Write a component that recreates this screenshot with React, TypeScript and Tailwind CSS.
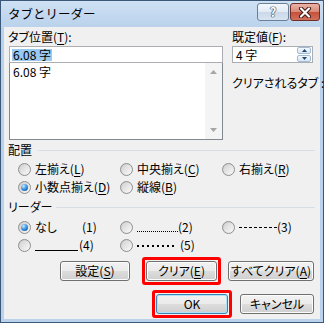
import React from "react";

const K = ({ c }: { c: string }) => <span className="underline underline-offset-[2px]">{c}</span>;

function Radio({ checked = false }: { checked?: boolean }) {
  return (
    <span className="flex h-[13px] w-[13px] shrink-0 items-center justify-center rounded-full border border-[#8f8f8f] bg-gradient-to-br from-[#c9c9c9] to-[#fafafa]">
      <span
        className={
          checked
            ? "h-[7px] w-[7px] rounded-full bg-[radial-gradient(circle_at_35%_30%,#c4ebff,#2f86d6_55%,#13508f)]"
            : "h-[9px] w-[9px] rounded-full bg-gradient-to-br from-[#d4d4d4] to-[#f7f7f7]"
        }
      />
    </span>
  );
}

function Btn({ children, className = "", def = false }: { children: React.ReactNode; className?: string; def?: boolean }) {
  return (
    <div
      className={`flex h-[20px] items-center justify-center whitespace-nowrap rounded-[3px] border leading-[14px] ${
        def ? "border-[#3c7fb1] shadow-[inset_0_0_0_1px_#aee3f8]" : "border-[#707070] shadow-[inset_0_0_0_1px_#fcfcfc]"
      } bg-[linear-gradient(#f2f2f2_0%,#ebebeb_50%,#dddddd_50%,#cfcfcf_100%)] ${className}`}
    >
      {children}
    </div>
  );
}

function Section({ title, line }: { title: string; line: string }) {
  return (
    <div className="flex h-[16px] items-center pl-[4px] pr-[5px]">
      <span>{title}</span>
      <span className={`${line} h-px flex-1 bg-[#d5dfe5]`} />
    </div>
  );
}

export default function App() {
  return (
    <div className="flex h-[323px] w-[324px] flex-col whitespace-nowrap border border-[#3c5878] bg-[#bad2ec] font-['Noto_Sans_CJK_JP','Liberation_Sans',sans-serif] text-[12px] leading-[14px] text-black [font-feature-settings:'palt']">
      {/* title bar */}
      <div className="flex h-[26px] shrink-0 items-start bg-gradient-to-b from-[#cfe0f3] to-[#bad2ec] pl-[7px] pr-[3px]">
        <span className="mt-[5px] text-[12.5px] leading-[16px] [font-feature-settings:normal]">タブとリーダー</span>
        <div className="ml-auto mt-[2px] flex gap-[1px]">
          <div className="flex h-[18px] w-[32px] items-center justify-center rounded-[3px] border border-[#6b7f96] bg-[linear-gradient(#f4f8fc_0%,#e1eaf4_50%,#c9d8ea_50%,#d8e4f1_100%)] text-[13px] font-bold leading-[14px] text-white [text-shadow:0_0_1px_#1d2b3a,0_0_1px_#1d2b3a,0_0_1px_#1d2b3a]">
            ?
          </div>
          <div className="flex h-[18px] w-[30px] items-center justify-center rounded-[3px] border border-[#6f2f27] bg-[linear-gradient(#e9b3a7_0%,#d98a78_50%,#c5503a_50%,#d0705c_100%)]">
            <svg width="14" height="11" viewBox="0 0 14 11">
              <path d="M3 1.5 L11 9.5 M11 1.5 L3 9.5" stroke="#3b1510" strokeWidth="4" strokeLinecap="round" />
              <path d="M3 1.5 L11 9.5 M11 1.5 L3 9.5" stroke="#ffffff" strokeWidth="2.2" strokeLinecap="round" />
            </svg>
          </div>
        </div>
      </div>

      {/* client area */}
      <div className="mx-[3px] mb-[3px] flex flex-1 flex-col bg-[#f0f0f0] pt-[3px]">
        <div className="flex">
          <div className="ml-[5px] flex w-[214px] flex-col">
            <div className="-ml-px h-[16px]">
              タブ位置(<K c="T" />):
            </div>
            <div className="flex h-[17px] items-center border border-[#abadb3] bg-white pl-[2px]">
              <span className="bg-[#99c9ef] px-px leading-[12px]">6.08 字</span>
            </div>
            <div className="flex h-[77px] border border-t-0 border-[#828790] bg-white">
              <div className="flex-1 pl-[3px] pt-[2px]">6.08 字</div>
              <div className="flex w-[17px] flex-col items-center justify-between bg-[#f4f4f4] py-[7px]">
                <svg width="7" height="4" viewBox="0 0 7 4">
                  <path d="M0 4 L3.5 0 L7 4 Z" fill="#a6a6a6" />
                </svg>
                <svg width="7" height="4" viewBox="0 0 7 4">
                  <path d="M0 0 L3.5 4 L7 0 Z" fill="#a6a6a6" />
                </svg>
              </div>
            </div>
          </div>
          <div className="ml-[9px] flex w-[81px] flex-col">
            <div className="h-[16px]">
              既定値(<K c="F" />):
            </div>
            <div className="flex h-[17px] items-center border border-[#abadb3] bg-white pr-px">
              <span className="flex-1 pl-[3px]">4 字</span>
              <div className="flex h-[15px] w-[14px] flex-col gap-px">
                <div className="flex flex-1 items-center justify-center rounded-[2px] border border-[#a3bcd6] bg-gradient-to-b from-[#f2f7fc] to-[#d7e6f5]">
                  <svg width="5" height="3" viewBox="0 0 5 3">
                    <path d="M0 3 L2.5 0 L5 3 Z" fill="#22446b" />
                  </svg>
                </div>
                <div className="flex flex-1 items-center justify-center rounded-[2px] border border-[#a3bcd6] bg-gradient-to-b from-[#f2f7fc] to-[#d7e6f5]">
                  <svg width="5" height="3" viewBox="0 0 5 3">
                    <path d="M0 0 L2.5 3 L5 0 Z" fill="#22446b" />
                  </svg>
                </div>
              </div>
            </div>
            <div className="mt-[13px]">クリアされるタブ :</div>
          </div>
        </div>

        {/* 配置 */}
        <div className="mt-[2px]">
          <Section title="配置" line="ml-[6px]" />
        </div>
        <div className="mt-[2px] grid grid-cols-[102px_102px_auto] pl-[14px]">
          <div className="flex h-[18px] items-center gap-[4px]">
            <Radio />
            <span>
              左揃え(<K c="L" />)
            </span>
          </div>
          <div className="flex h-[18px] items-center gap-[4px]">
            <Radio />
            <span>
              中央揃え(<K c="C" />)
            </span>
          </div>
          <div className="flex h-[18px] items-center gap-[4px]">
            <Radio />
            <span>
              右揃え(<K c="R" />)
            </span>
          </div>
          <div className="flex h-[18px] items-center gap-[4px]">
            <Radio checked />
            <span>
              小数点揃え(<K c="D" />)
            </span>
          </div>
          <div className="flex h-[18px] items-center gap-[4px]">
            <Radio />
            <span>
              縦線(<K c="B" />)
            </span>
          </div>
        </div>

        {/* リーダー */}
        <div className="mt-[3px]">
          <Section title="リーダー" line="ml-[4px]" />
        </div>
        <div className="mt-[3px] grid grid-cols-[102px_102px_auto] pl-[14px]">
          <div className="flex h-[18px] items-center gap-[4px]">
            <Radio checked />
            <span className="w-[43px]">なし</span>
            <span>(1)</span>
          </div>
          <div className="flex h-[18px] items-center gap-[4px]">
            <Radio />
            <span className="mt-[9px] h-px w-[41px] bg-[repeating-linear-gradient(90deg,#000_0_1px,transparent_1px_2px)]" />
            <span className="-ml-[4px]">(2)</span>
          </div>
          <div className="flex h-[18px] items-center gap-[4px]">
            <Radio />
            <span className="mt-[1px] h-px w-[38px] bg-[repeating-linear-gradient(90deg,#000_0_3px,transparent_3px_5px)]" />
            <span className="-ml-[4px]">(3)</span>
          </div>
          <div className="flex h-[18px] items-center gap-[4px]">
            <Radio />
            <span className="mt-[10px] h-px w-[43px] bg-black" />
            <span className="-ml-[3px]">(4)</span>
          </div>
          <div className="flex h-[18px] items-center gap-[4px]">
            <Radio />
            <span className="mt-[1px] h-[2px] w-[38px] bg-[repeating-linear-gradient(90deg,#000_0_2px,transparent_2px_5px)]" />
            <span className="ml-px">(5)</span>
          </div>
        </div>

        {/* buttons */}
        <div className="mt-[3px] flex items-center pr-[6px]">
          <Btn className="ml-[56px] w-[70px]">
            設定(<K c="S" />)
          </Btn>
          <div className="ml-[12px] rounded-[3px] border-[3px] border-[#ff0000] p-px">
            <Btn className="w-[71px]">
              クリア(<K c="E" />)
            </Btn>
          </div>
          <Btn className="ml-[7px] w-[86px]">
            すべてクリア(<K c="A" />)
          </Btn>
        </div>
        <div className="mt-[5px] flex items-center justify-end pr-[6px]">
          <div className="rounded-[3px] border-[3px] border-[#ff0000] p-px">
            <Btn def className="w-[72px]">
              OK
            </Btn>
          </div>
          <Btn className="ml-[8px] w-[74px]">キャンセル</Btn>
        </div>
      </div>
    </div>
  );
}
